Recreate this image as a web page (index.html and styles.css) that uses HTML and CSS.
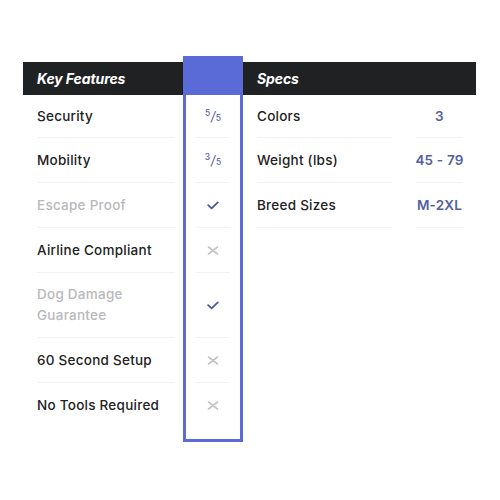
FILE: index.html
```html
<!DOCTYPE html>
<html>
<head>
<meta charset="utf-8">
<link rel="stylesheet" href="styles.css">
</head>
<body>
<div class="page">
  <div class="features">
    <div class="labels">
      <div class="head">Key Features</div>
      <div class="row"><span class="lbl">Security</span></div>
      <div class="row"><span class="lbl">Mobility</span></div>
      <div class="row"><span class="lbl faded">Escape Proof</span></div>
      <div class="row"><span class="lbl">Airline Compliant</span></div>
      <div class="row tall"><span class="lbl faded">Dog Damage<br>Guarantee</span></div>
      <div class="row"><span class="lbl">60 Second Setup</span></div>
      <div class="row last"><span class="lbl">No Tools Required</span></div>
    </div>
    <div class="highlight">
      <div class="hhead"></div>
      <div class="cell"><span class="val frac"><sup>5</sup><span class="sl">/</span><sub>5</sub></span></div>
      <div class="cell"><span class="val frac"><sup>3</sup><span class="sl">/</span><sub>5</sub></span></div>
      <div class="cell"><svg class="ico" width="12" height="9" viewBox="0 0 12 9"><path d="M1.2 4.2 L4.6 7.4 L10.8 1.4" fill="none" stroke="#4b59a3" stroke-width="1.8" stroke-linecap="round" stroke-linejoin="round"/></svg></div>
      <div class="cell"><svg class="ico" width="12" height="9" viewBox="0 0 12 9"><path d="M1.5 1 L10.5 8 M10.5 1 L1.5 8" fill="none" stroke="#c4c4c8" stroke-width="1.6" stroke-linecap="round"/></svg></div>
      <div class="cell tall"><svg class="ico" width="12" height="9" viewBox="0 0 12 9"><path d="M1.2 4.2 L4.6 7.4 L10.8 1.4" fill="none" stroke="#4b59a3" stroke-width="1.8" stroke-linecap="round" stroke-linejoin="round"/></svg></div>
      <div class="cell"><svg class="ico" width="12" height="9" viewBox="0 0 12 9"><path d="M1.5 1 L10.5 8 M10.5 1 L1.5 8" fill="none" stroke="#c4c4c8" stroke-width="1.6" stroke-linecap="round"/></svg></div>
      <div class="cell last"><svg class="ico" width="12" height="9" viewBox="0 0 12 9"><path d="M1.5 1 L10.5 8 M10.5 1 L1.5 8" fill="none" stroke="#c4c4c8" stroke-width="1.6" stroke-linecap="round"/></svg></div>
    </div>
  </div>
  <div class="specs">
    <div class="head">Specs</div>
    <div class="srow"><span class="slbl">Colors</span><span class="sval">3</span></div>
    <div class="srow"><span class="slbl">Weight (lbs)</span><span class="sval">45 - 79</span></div>
    <div class="srow"><span class="slbl">Breed Sizes</span><span class="sval">M-2XL</span></div>
  </div>
</div>
</body>
</html>
```
FILE: styles.css
```css
* { box-sizing: border-box; }
html, body { margin: 0; background: #fff; }
body {
  font-family: "Inter", "Lato", sans-serif;
  color: #222;
  width: 500px;
  height: 500px;
}
.page {
  display: flex;
  padding: 56px 0 0 23px;
}
.features {
  display: flex;
  width: 220px;
}
.labels {
  width: 160px;
  padding-top: 6px;
}
.head {
  height: 33px;
  background: #202123;
  color: #fff;
  font-weight: 700;
  font-style: italic;
  font-size: 14px;
  line-height: 33px;
  padding-left: 14px;
  letter-spacing: -0.1px;
}
.row {
  height: 45px;
  margin: 0 8px 0 14px;
  border-bottom: 1px solid #f1f1f2;
  display: flex;
  align-items: center;
}
.labels .head + .row { height: 43px; }
.row.tall { height: 65px; }
.row.last { border-bottom: none; }
.lbl {
  font-size: 13.5px;
  font-weight: 500;
  line-height: 21px;
  color: #222;
  letter-spacing: 0.25px;
}
.lbl.faded { color: #b9b9bc; }
.highlight {
  width: 60px;
  border: 3px solid #5a6ad6;
  border-top-width: 0;
  height: 386px;
  padding: 0 10px;
  display: flex;
  flex-direction: column;
}
.hhead {
  height: 39px;
  background: #5a6ad6;
  margin: 0 -10px;
  flex: none;
}
.cell {
  height: 45px;
  flex: none;
  border-bottom: 1px solid #f1f1f2;
  display: flex;
  align-items: center;
  justify-content: center;
}
.hhead + .cell { height: 43px; }
.cell.tall { height: 65px; }
.cell.last { border-bottom: none; }
.val { color: #55609f; font-weight: 500; }
.frac { display: inline-flex; align-items: center; font-size: 12px; line-height: 14px; }
.frac sup { font-size: 8.5px; position: relative; top: -3px; vertical-align: baseline; line-height: 10px; }
.frac sub { font-size: 8.5px; position: relative; top: 2px; vertical-align: baseline; line-height: 10px; }
.frac .sl { font-size: 13px; font-weight: 400; margin: 0 0.5px; transform: skewX(-8deg); }
.ico { display: block; }
.specs {
  width: 233px;
  padding-top: 6px;
}
.srow {
  height: 45px;
  display: flex;
  align-items: stretch;
}
.specs .head + .srow { height: 43px; }
.slbl {
  margin-left: 14px;
  width: 135px;
  border-bottom: 1px solid #f1f1f2;
  display: flex;
  align-items: center;
  font-size: 13.5px;
  font-weight: 500;
  color: #222;
  letter-spacing: 0.25px;
}
.sval {
  margin-left: 24px;
  width: 47px;
  border-bottom: 1px solid #f1f1f2;
  display: flex;
  align-items: center;
  justify-content: center;
  font-size: 13.5px;
  font-weight: 600;
  color: #55609f;
  white-space: nowrap;
  letter-spacing: 0.2px;
}
```
